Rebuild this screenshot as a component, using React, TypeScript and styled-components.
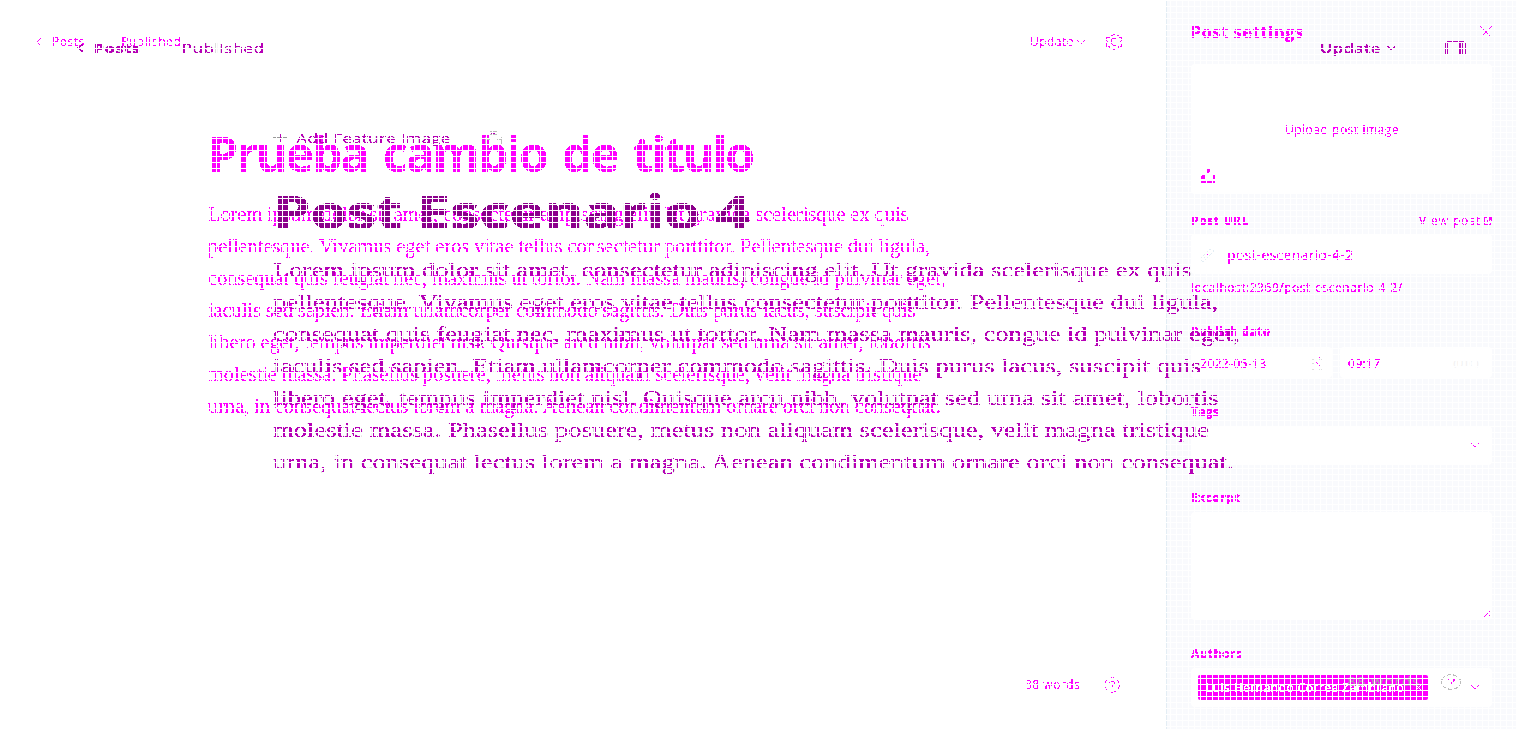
import React, { useLayoutEffect, useRef, useState } from "react";
import styled, { createGlobalStyle } from "styled-components";

const M = "#ff00ff";
const P = "#b600b6";
const FRINGE = "#999";

const Global = createGlobalStyle`
  * { box-sizing: border-box; }
  body { margin: 0; background: #fff; overflow: hidden; }
`;

const Page = styled.div`
  position: relative;
  display: grid;
  width: 1516px;
  height: 729px;
  overflow: hidden;
  background: #fff;
  font-family: "Open Sans", sans-serif;
  & > * { grid-area: 1 / 1; }
`;

const Mesh = styled.div`
  position: absolute;
  inset: 0;
  pointer-events: none;
  background:
    repeating-linear-gradient(to right, #fff 0 1px, transparent 1px 6px),
    repeating-linear-gradient(to bottom, #fff 0 1px, transparent 1px 6px);
`;

const Filters = styled.svg`
  width: 0;
  height: 0;
`;

const Current = styled.div`
  display: grid;
  grid-template-columns: 1166px 350px;
  height: 729px;
  color: ${M};
`;

const Previous = styled.div`
  width: 1166px;
  height: 729px;
  color: ${P};
  transform: scaleX(1.3002);
  transform-origin: 0 0;
`;

const Editor = styled.main`
  display: flex;
  flex-direction: column;
  height: 729px;
`;

const TopBar = styled.header<{ $pad: string }>`
  display: flex;
  align-items: center;
  height: 20px;
  margin: ${(p) => p.$pad};
  flex: none;
`;

const Spacer = styled.div<{ $w?: number }>`
  flex: ${(p) => (p.$w ? `0 0 ${p.$w}px` : "1")};
`;

type LineStyle = { $size: number; $weight?: number; $font?: string; $lh?: number; $color?: string; $filter?: string; $space?: number };

const Line = styled.span<LineStyle>`
  display: block;
  flex: none;
  width: max-content;
  white-space: pre;
  font-size: ${(p) => p.$size}px;
  font-weight: ${(p) => p.$weight ?? 400};
  line-height: ${(p) => p.$lh ?? 18}px;
  font-family: ${(p) => p.$font ?? "inherit"};
  word-spacing: ${(p) => p.$space ?? 0}px;
  color: ${(p) => p.$color ?? "inherit"};
  filter: ${(p) => (p.$filter ? `url(#${p.$filter})` : "none")};
`;

type FitProps = { text: string; w: number; size: number; weight?: number; font?: string; lh?: number; color?: string; filter?: string; space?: number };

/* Tracks a line out or in so that it fills its measure. */
function Fit({ text, w, size, weight, font, lh, color, filter = "crisp", space }: FitProps) {
  const ref = useRef<HTMLSpanElement>(null);
  const [gap, setGap] = useState(0);
  useLayoutEffect(() => {
    if (ref.current) setGap((w - ref.current.offsetWidth) / text.length);
  }, [text, w]);
  return (
    <Line ref={ref} $size={size} $weight={weight} $font={font} $lh={lh} $color={color} $filter={filter} $space={space} style={{ letterSpacing: gap }}>
      {text}
    </Line>
  );
}

const Old = (props: FitProps) => <Fit color={FRINGE} filter="halo" {...props} />;
const Label = ({ text, w }: { text: string; w: number }) => <Fit text={text} w={w} size={12} weight={700} filter="dense" />;

const Article = styled.article<{ $top: number; $left: number }>`
  margin: ${(p) => p.$top}px 0 0 ${(p) => p.$left}px;
`;

const Body = styled.div<{ $top: number }>`
  padding-top: ${(p) => p.$top}px;
`;

const Feature = styled.div`
  display: flex;
  align-items: center;
  height: 18px;
  margin-bottom: 34px;
`;

const Footer = styled.footer<{ $m: string }>`
  display: flex;
  align-items: center;
  height: 20px;
  margin: ${(p) => p.$m};
`;

const Panel = styled.aside`
  display: flex;
  flex-direction: column;
  height: 729px;
  padding: 22px 24px 0 24px;
  border-left: 1px solid #e3edf4;
  background: #f9fafd;
`;

const Row = styled.div<{ $h: number; $mt?: number }>`
  display: flex;
  align-items: center;
  justify-content: space-between;
  height: ${(p) => p.$h}px;
  margin-top: ${(p) => p.$mt ?? 0}px;
  flex: none;
`;

const Field = styled.div<{ $h: number; $mt?: number; $w?: number; $pad?: string; $end?: boolean }>`
  display: flex;
  align-items: ${(p) => (p.$end ? "flex-end" : "center")};
  flex: none;
  width: ${(p) => p.$w ?? 301}px;
  height: ${(p) => p.$h}px;
  margin-top: ${(p) => p.$mt ?? 0}px;
  padding: ${(p) => p.$pad ?? "0 9px"};
  border-radius: 4px;
  background: #fff;
`;

const Upload = styled.div`
  display: flex;
  flex-direction: column;
  flex: none;
  width: 301px;
  height: 130px;
  margin-top: 22px;
  padding: 48px 0 0 10px;
  border-radius: 4px;
  background: #fff;
`;

const UploadButton = styled.div`
  display: flex;
  align-items: center;
  justify-content: center;
  width: 136px;
  height: 35px;
  margin: 0 0 22px 73px;
  border-radius: 4px;
`;

const Chip = styled.div`
  display: flex;
  align-items: center;
  width: 230px;
  height: 25px;
  padding: 0 6px 0 8px;
  border-radius: 2px;
  background: ${M};
  color: #fff;
`;

const Icon = styled.svg`
  display: block;
  flex: none;
  fill: none;
  stroke: currentColor;
  shape-rendering: crispEdges;
`;

const Chevron = ({ w = 8, h = 5, sw = 1 }: { w?: number; h?: number; sw?: number }) => (
  <Icon width={w} height={h} viewBox="0 0 8 5" strokeWidth={sw}><path d="M.5 .5 4 4 7.5 .5" /></Icon>
);

const Back = ({ sw = 1 }: { sw?: number }) => (
  <Icon width="5" height="8" viewBox="0 0 5 8" strokeWidth={sw}><path d="M4.5 .5 1 4l3.5 3.5" /></Icon>
);

const Help = ({ color = M }: { color?: string }) => (
  <Icon width="16" height="16" viewBox="0 0 16 16" color={color}>
    <circle cx="8" cy="8" r="7.3" strokeDasharray="4 1" />
    <path d="M5.500 6c1-2 5-2 5 0 0 2-2.500 2-2.500 4" stroke={M} />
  </Icon>
);

const SERIF = '"Liberation Serif", serif';

const paragraph: { text: string; now: number; before: number }[] = [
  { text: "Lorem ipsum dolor sit amet, consectetur adipiscing elit. Ut gravida scelerisque ex quis", now: 700, before: 706 },
  { text: "pellentesque. Vivamus eget eros vitae tellus consectetur porttitor. Pellentesque dui ligula,", now: 722, before: 727 },
  { text: "consequat quis feugiat nec, maximus ut tortor. Nam massa mauris, congue id pulvinar eget,", now: 738, before: 744 },
  { text: "iaculis sed sapien. Etiam ullamcorper commodo sagittis. Duis purus lacus, suscipit quis", now: 707, before: 713.5 },
  { text: "libero eget, tempus imperdiet nisl. Quisque arcu nibh, volutpat sed urna sit amet, lobortis", now: 722, before: 727 },
  { text: "molestie massa. Phasellus posuere, metus non aliquam scelerisque, velit magna tristique", now: 713, before: 719.5 },
  { text: "urna, in consequat lectus lorem a magna. Aenean condimentum ornare orci non consequat.", now: 733, before: 739 },
];

export default function App() {
  return (
    <Page>
      <Global />
      <Filters>
        <filter id="crisp" x="0" y="0" width="100%" height="100%">
          <feComponentTransfer><feFuncA type="discrete" tableValues="0 0 1 1 1" /></feComponentTransfer>
        </filter>
        <filter id="dense" x="0" y="0" width="100%" height="100%">
          <feComponentTransfer><feFuncA type="discrete" tableValues="0 1 1 1" /></feComponentTransfer>
        </filter>
        <filter id="halo" x="0" y="0" width="100%" height="100%" colorInterpolationFilters="sRGB">
          <feComponentTransfer in="SourceAlpha" result="core"><feFuncA type="discrete" tableValues="0 0 1 1 1" /></feComponentTransfer>
          <feFlood floodColor={P} />
          <feComposite in2="core" operator="in" result="ink" />
          <feMerge><feMergeNode in="SourceGraphic" /><feMergeNode in="ink" /></feMerge>
        </filter>
        <filter id="heavy" x="0" y="0" width="100%" height="100%" colorInterpolationFilters="sRGB">
          <feComponentTransfer in="SourceAlpha" result="core"><feFuncA type="discrete" tableValues="0 0 1 1 1" /></feComponentTransfer>
          <feFlood floodColor="#8b008b" />
          <feComposite in2="core" operator="in" result="ink" />
          <feMerge><feMergeNode in="SourceGraphic" /><feMergeNode in="ink" /></feMerge>
        </filter>
      </Filters>
      <Current>
        <Editor>
          <TopBar $pad="32px 43px 0 36px">
            <Back />
            <Spacer $w={11} />
            <Fit text="Posts" w={33} size={12} />
            <Spacer $w={36} />
            <Fit text="Published" w={60} size={12} />
            <Spacer />
            <Fit text="Update" w={44} size={12} />
            <Spacer $w={3} />
            <Chevron />
            <Spacer $w={20} />
            <Icon width="18" height="18" viewBox="0 0 18 18">
              <path d="M6 2.500h1.500l1-1h2l1 1H13l1 2h2.500v3L15 9l1.500 1.500v3H14l-1 2h-2l-2 1-1.500-1H5l-1-2H1.500v-3L3 9 1.500 7.500v-3H4z" strokeDasharray="4 1" />
              <path d="M11.500 7H11V5.500H7.500L6.500 7v3.500L8 12h3.500v-1" />
            </Icon>
          </TopBar>
          <Article $top={72} $left={208}>
            <Fit text="Prueba cambio de titulo" w={545} size={48} weight={700} lh={60} space={5} />
            <Body $top={14}>
              {paragraph.map((l) => <Fit key={l.text} text={l.text} w={l.now} size={20.5} lh={32} font={SERIF} />)}
            </Body>
          </Article>
          <Spacer />
          <Footer $m="0 46px 34px 1025px">
            <Fit text="88 words" w={55} size={12} />
            <Spacer />
            <Help />
          </Footer>
        </Editor>
        <Panel>
          <Row $h={20}>
            <Fit text="Post settings" w={113} size={16} weight={700} lh={20} filter="dense" />
            <Icon width="12" height="12" viewBox="0 0 12 12"><path d="M.5 .5l11 11M11.500 .5l-11 11" /></Icon>
          </Row>
          <Upload>
            <UploadButton><Fit text="Upload post image" w={114} size={12} /></UploadButton>
            <Icon width="14" height="14" viewBox="0 0 14 14">
              <path fill={M} stroke="none" d="M5 0h4v3H8v1H6V3H5zM0 7l2-1h2v4H0zm11-1h2l1 1v3h-3zM0 11h14v3H0z" />
            </Icon>
          </Upload>
          <Row $h={18} $mt={18}>
            <Label text="Post URL" w={58} />
            <Spacer />
            <Fit text="View post" w={62} size={12} />
            <Spacer $w={3} />
            <Icon width="8" height="8" viewBox="0 0 8 8"><path d="M3 .5H.5v7h6V5M4 .5h3.500V4M7 1 3 5" strokeWidth="1.5" /></Icon>
          </Row>
          <Field $h={40} $mt={4} $pad="2px 9px 0">
            <Icon width="14" height="14" viewBox="0 0 14 14" color="#e3edf4">
              <path d="M6 5l4-4h2l1 1v2L9 8M8 6l-4 4M5 6 1 10v2l1 1h2l4-4" strokeDasharray="3 1" />
              <path d="M7 6.500h1" stroke={M} />
            </Icon>
            <Spacer $w={13} />
            <Fit text="post-escenario-4-2" w={126} size={14} filter="dense" />
          </Field>
          <Row $h={18} $mt={5}><Fit text="localhost:2369/post-escenario-4-2/" w={212} size={12} filter="dense" /></Row>
          <Row $h={18} $mt={26}><Label text="Publish date" w={79} /></Row>
          <Row $h={31} $mt={6}>
            <Field $h={31} $w={141} $pad="2px 9px 0">
              <Fit text="2022-05-13" w={67} size={12} filter="dense" />
              <Spacer />
              <Icon width="12" height="13" viewBox="0 0 12 13" color="#ddd">
                <path d="M1 2.500h3M8 2.500h3M1 6.500h3M1 12.500h3M8 12.500h3M.5 9.500h3" />
                <path d="M3 .5h2M8 .5h2M5 5l2 2M8 9l2-2" stroke={M} strokeDasharray="1 1" />
              </Icon>
            </Field>
            <Field $h={31} $w={152} $pad="2px 13px 0 8px">
              <Fit text="09:17" w={33} size={12} filter="dense" />
              <Spacer />
              <Fit text="(UTC)" w={26} size={9} color="#eee" filter="" />
            </Field>
          </Row>
          <Row $h={18} $mt={25}><Label text="Tags" w={28} /></Row>
          <Field $h={39} $mt={5} $pad="0 13px"><Spacer /><Chevron /></Field>
          <Row $h={18} $mt={24}><Label text="Excerpt" w={49} /></Row>
          <Field $h={108} $mt={5} $end $pad="0 2px 2px">
            <Spacer />
            <Icon width="7" height="7" viewBox="0 0 7 7"><path d="M.5 6.500l6-6M4.500 6.500l2-2" /></Icon>
          </Field>
          <Row $h={18} $mt={25}><Label text="Authors" w={51} /></Row>
          <Field $h={39} $mt={5} $pad="0 13px 0 7px">
            <Chip>
              <Fit text="Luis Hernando Correa Zambrano" w={198} size={12} filter="dense" />
              <Spacer />
              <Icon width="7" height="7" viewBox="0 0 7 7"><path d="M.5 .5l6 6M6.500 .5l-6 6" /></Icon>
            </Chip>
            <Spacer />
            <Chevron />
          </Field>
        </Panel>
      </Current>
      <Previous>
        <Editor>
          <TopBar $pad="38px 38px 0 59px">
            <Back sw={1.5} />
            <Spacer $w={8} />
            <Old text="Posts" w={36} size={13} weight={700} />
            <Spacer $w={32} />
            <Old text="Published" w={64} size={13} />
            <Spacer />
            <Old text="Update" w={47} size={13} weight={600} />
            <Spacer $w={4} />
            <Chevron h={4} sw={1.5} />
            <Spacer $w={37} />
            <Icon width="17" height="14" viewBox="0 0 17 14">
              <path d="M2 .5h14M.5 2v11M2.500 2v11M12 2v11M14 2v11M16 2v11" />
            </Icon>
          </TopBar>
          <Article $top={71} $left={210}>
            <Feature>
              <Icon width="11" height="11" viewBox="0 0 11 11" color={FRINGE}>
                <path d="M0 5h11" strokeWidth="1.5" /><path d="M5.500 1v8" stroke={P} />
              </Icon>
              <Spacer $w={7} />
              <Old text="Add Feature Image" w={119} size={13} />
              <Spacer $w={26} />
              <Icon width="13" height="14" viewBox="0 0 13 14" color="#bbb">
                <path d="M4 .5h5M4 3.500h5M.5 6v7M12.500 6v7M1 8.500h3M9 8.500h3M1 13.500h11" />
                <path d="M5 2.500h3" stroke={P} />
              </Icon>
            </Feature>
            <Old text="Post Escenario 4" w={366} size={46} weight={700} lh={60} filter="heavy" />
            <Body $top={13}>
              {paragraph.map((l) => <Old key={l.text} text={l.text} w={l.before} size={20.5} lh={32} font={SERIF} />)}
            </Body>
          </Article>
          <Spacer />
          <Footer $m="0 42px 37px 1036px">
            <Fit text="88 words" w={56} size={12} color="#aaa" filter="" />
            <Spacer />
            <Help color="#bbb" />
          </Footer>
        </Editor>
      </Previous>
      <Mesh />
    </Page>
  );
}
